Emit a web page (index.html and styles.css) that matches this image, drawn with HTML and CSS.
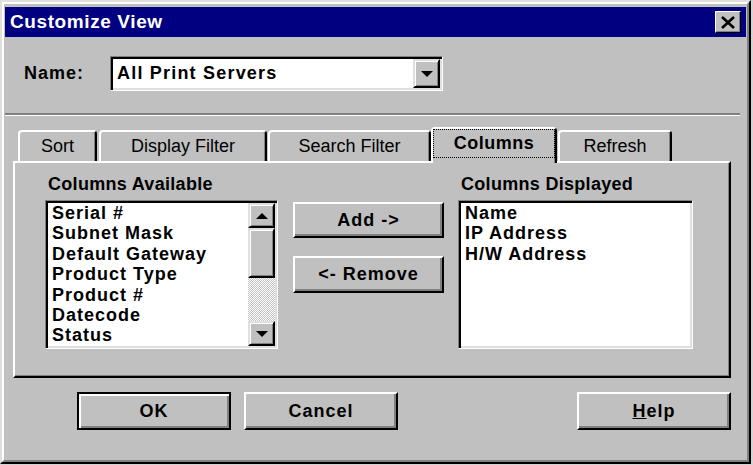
FILE: index.html
```html
<!DOCTYPE html>
<html lang="en">
<head>
    <meta charset="UTF-8">
    <title>Customize View</title>
    <link rel="stylesheet" href="styles.css">
</head>
<body>
    <div class="dialog">
        <div class="frame">
            <!-- Title bar -->
            <div class="titlebar">
                <span class="title">Customize View</span>
                <button class="close-btn">
                    <svg width="16" height="13" viewBox="0 0 16 13">
                        <path d="M2 1 L14 12 M14 1 L2 12" stroke="#000" stroke-width="2.6" fill="none"/>
                    </svg>
                </button>
            </div>

            <!-- Name combo -->
            <div class="name-row">
                <span class="name-label">Name:</span>
                <div class="combo">
                    <span class="combo-text">All Print Servers</span>
                    <span class="combo-btn"><span class="arrow-down"></span></span>
                </div>
            </div>

            <div class="separator"></div>

            <!-- Tabs -->
            <div class="tabs">
                <div class="tab tab-sort">Sort</div>
                <div class="tab tab-display">Display Filter</div>
                <div class="tab tab-search">Search Filter</div>
                <div class="tab tab-columns active"><span class="focus">Columns</span></div>
                <div class="tab tab-refresh">Refresh</div>
            </div>

            <div class="panel">
                <div class="col col-left">
                    <div class="col-label">Columns Available</div>
                    <div class="listbox">
                        <ul class="items">
                            <li>Serial #</li>
                            <li>Subnet Mask</li>
                            <li>Default Gateway</li>
                            <li>Product Type</li>
                            <li>Product #</li>
                            <li>Datecode</li>
                            <li>Status</li>
                        </ul>
                        <div class="scrollbar">
                            <div class="sb-btn"><span class="arrow-up"></span></div>
                            <div class="sb-thumb"></div>
                            <div class="sb-track"></div>
                            <div class="sb-btn"><span class="arrow-down"></span></div>
                        </div>
                    </div>
                </div>

                <div class="col col-mid">
                    <button class="btn btn-add">Add -&gt;</button>
                    <button class="btn btn-remove">&lt;- Remove</button>
                </div>

                <div class="col col-right">
                    <div class="col-label">Columns Displayed</div>
                    <div class="listbox">
                        <ul class="items">
                            <li>Name</li>
                            <li>IP Address</li>
                            <li>H/W Address</li>
                        </ul>
                    </div>
                </div>
            </div>

            <!-- Dialog buttons -->
            <div class="footer">
                <button class="btn btn-footer btn-default">OK</button>
                <button class="btn btn-footer btn-cancel">Cancel</button>
                <button class="btn btn-footer btn-help"><u>H</u>elp</button>
            </div>
        </div>
    </div>
</body>
</html>
```

FILE: styles.css
```css
body {
    margin: 0;
    background: #d4d4d4;
    font-family: "Liberation Sans", Arial, sans-serif;
    color: #000;
}

.dialog {
    width: 751px;
    height: 464px;
    box-sizing: border-box;
    background: #c0c0c0;
    border: 2px solid;
    border-color: #dfdfdf #000 #000 #dfdfdf;
}

.frame {
    height: 100%;
    box-sizing: border-box;
    border: 2px solid;
    border-color: #fff #808080 #808080 #fff;
    padding: 3px 1px 0 1px;
    display: flex;
    flex-direction: column;
}

/* Title bar */
.titlebar {
    height: 30px;
    flex-shrink: 0;
    background: #000080;
    display: flex;
    align-items: center;
    justify-content: space-between;
    padding: 0 5px;
}

.title {
    color: #fff;
    font-weight: bold;
    font-size: 19px;
    letter-spacing: 0.6px;
}

.close-btn {
    width: 26px;
    height: 22px;
    padding: 0;
    box-sizing: border-box;
    background: #c0c0c0;
    border: 1px solid;
    border-color: #fff #000 #000 #fff;
    box-shadow: inset -1px -1px 0 #808080;
    display: flex;
    align-items: center;
    justify-content: center;
}

/* Name row */
.name-row {
    display: flex;
    align-items: center;
    margin: 19px 0 0 19px;
}

.name-label {
    width: 86px;
    font-weight: bold;
    font-size: 18px;
    letter-spacing: 1px;
}

.combo,
.listbox {
    box-sizing: border-box;
    background: #fff;
    border: 1px solid;
    border-color: #808080 #fff #fff #808080;
    box-shadow: inset 2px 2px 0 #000, inset -2px -2px 0 #dfdfdf;
    padding: 2px;
    display: flex;
}

.combo {
    width: 333px;
    height: 35px;
    align-items: center;
}

.combo-text {
    flex: 1;
    padding-left: 4px;
    font-weight: bold;
    font-size: 18px;
    letter-spacing: 1.2px;
}

.combo-btn,
.sb-btn {
    box-sizing: border-box;
    background: #c0c0c0;
    border: 2px solid;
    border-color: #dfdfdf #000 #000 #dfdfdf;
    box-shadow: inset 1px 1px 0 #fff, inset -1px -1px 0 #808080;
    display: flex;
    align-items: center;
    justify-content: center;
}

.combo-btn {
    width: 27px;
    align-self: stretch;
}

.arrow-down,
.arrow-up {
    width: 0;
    height: 0;
    border-left: 6px solid transparent;
    border-right: 6px solid transparent;
}

.arrow-down { border-top: 6px solid #000; }
.arrow-up { border-bottom: 6px solid #000; }

.separator {
    margin: 22px 6px 0 0;
    border-top: 2px solid #808080;
    border-bottom: 1px solid #fff;
}

/* Tabs */
.tabs {
    display: flex;
    align-items: flex-end;
    margin: 11px 0 0 8px;
    padding-left: 5px;
    height: 34px;
}

.tab {
    box-sizing: border-box;
    height: 31px;
    border-top: 2px solid #fff;
    border-left: 2px solid #fff;
    border-right: 2px solid #000;
    box-shadow: inset -1px 0 0 #808080;
    border-radius: 4px 4px 0 0;
    display: flex;
    align-items: center;
    justify-content: center;
    font-size: 18px;
}

.tab-sort { width: 79px; margin-right: 2px; }
.tab-display { width: 168px; margin-right: 1px; }
.tab-search { width: 163px; }
.tab-columns { width: 126px; }
.tab-refresh { width: 114px; margin-left: 1px; }

.tab.active {
    height: 36px;
    margin-bottom: -2px;
    z-index: 1;
    background: #c0c0c0;
    font-weight: bold;
    letter-spacing: 0.5px;
    align-items: stretch;
    padding-bottom: 5px;
}

.focus {
    flex: 1;
    border: 1px dotted #000;
    display: flex;
    align-items: center;
    justify-content: center;
}

/* Panel */
.panel {
    box-sizing: border-box;
    width: 718px;
    height: 217px;
    margin-left: 8px;
    border: 2px solid;
    border-color: #fff #000 #000 #fff;
    box-shadow: inset -1px -1px 0 #808080;
    padding: 11px 0 0 30px;
    display: flex;
    align-items: flex-start;
}

.col-left { width: 233px; }
.col-right { width: 235px; margin-left: 14px; }

.col-mid {
    width: 151px;
    margin-left: 15px;
    padding-top: 28px;
    display: flex;
    flex-direction: column;
}

.col-label {
    padding-left: 3px;
    font-weight: bold;
    font-size: 18px;
    line-height: 21px;
    letter-spacing: 0.3px;
}

.listbox {
    height: 149px;
    margin-top: 5px;
    overflow: hidden;
}

.items {
    flex: 1;
    list-style: none;
    margin: 0;
    padding: 0 0 0 4px;
    overflow: hidden;
}

.items li {
    font-weight: bold;
    font-size: 18px;
    line-height: 20.4px;
    letter-spacing: 1px;
    white-space: nowrap;
}

.scrollbar {
    width: 27px;
    display: flex;
    flex-direction: column;
}

.sb-btn { height: 25px; }

.sb-thumb {
    height: 50px;
    box-sizing: border-box;
    background: #c0c0c0;
    border: 2px solid;
    border-color: #dfdfdf #000 #000 #dfdfdf;
    box-shadow: inset 1px 1px 0 #fff, inset -1px -1px 0 #808080;
}

.sb-track {
    flex: 1;
    background-color: #fff;
    background-image: repeating-conic-gradient(#c0c0c0 0 25%, #fff 0 50%);
    background-size: 2px 2px;
}

/* Buttons */
.btn {
    box-sizing: border-box;
    padding: 0;
    background: #c0c0c0;
    border: 2px solid;
    border-color: #fff #000 #000 #fff;
    box-shadow: inset -2px -2px 0 #808080;
    font-family: "Liberation Sans", Arial, sans-serif;
    font-weight: bold;
    font-size: 18px;
    letter-spacing: 1px;
    color: #000;
}

.btn-add { height: 36px; margin-bottom: 18px; }
.btn-remove { height: 37px; }

.footer {
    display: flex;
    margin: 14px 15px 0 72px;
}

.btn-footer {
    width: 154px;
    height: 38px;
}

.btn-default {
    border-color: #000;
    box-shadow: inset 2px 2px 0 #fff, inset -2px -2px 0 #808080;
}

.btn-cancel { margin-left: 13px; }
.btn-help { margin-left: auto; }
```
